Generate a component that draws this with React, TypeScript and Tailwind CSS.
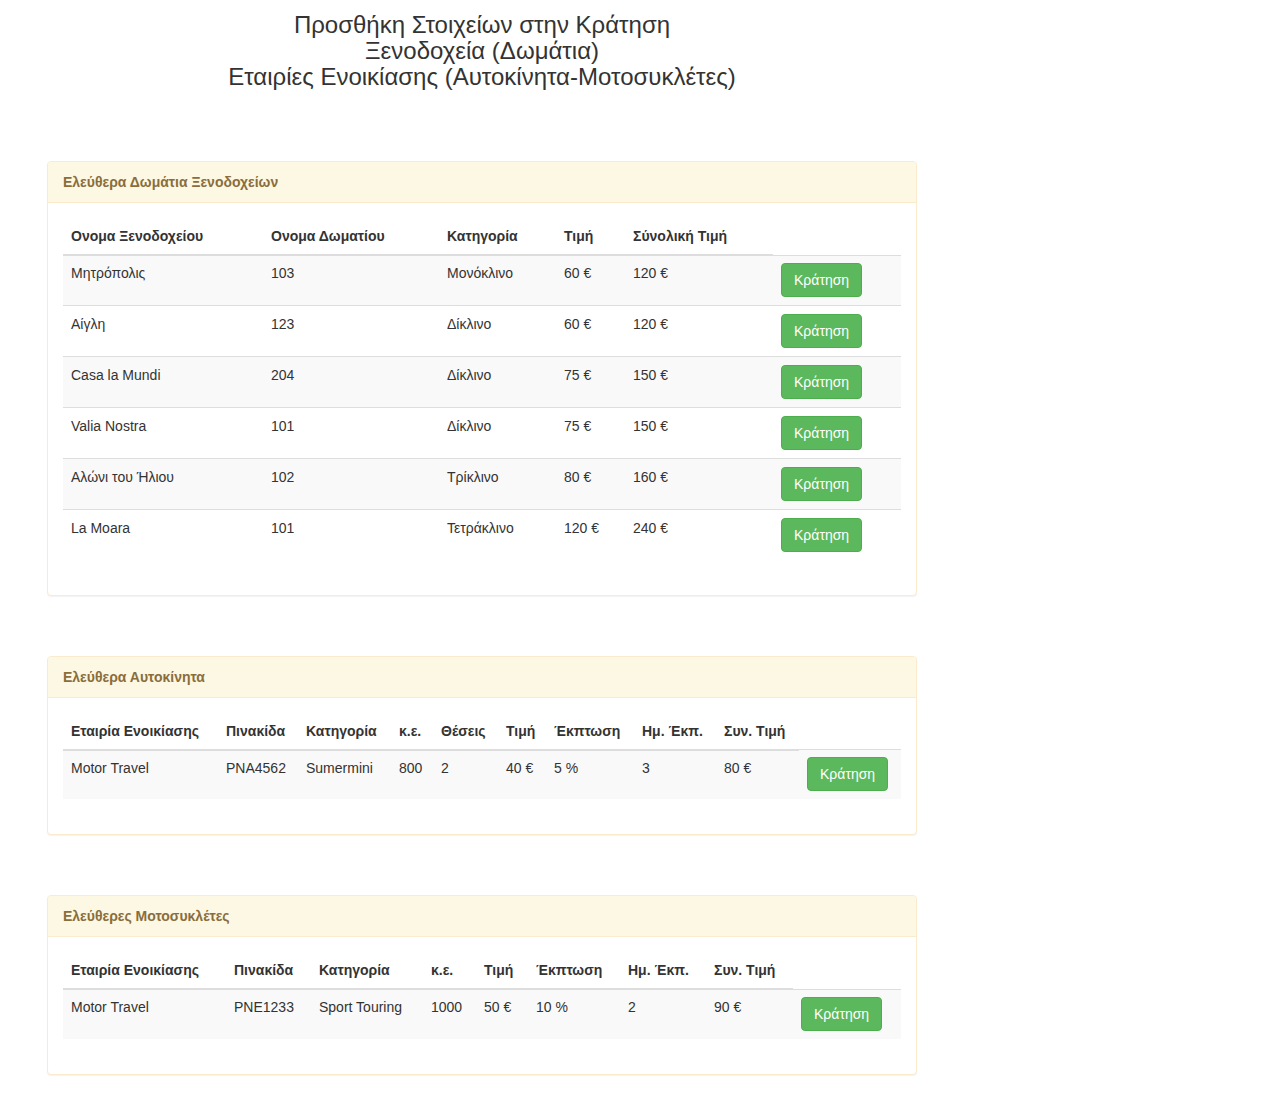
import React from 'react';

type Column = { label: string; width: number };

interface PanelTableProps {
  title: string;
  columns: Column[];
  buttonWidth: number;
  rows: string[][];
}

const hotelColumns: Column[] = [
  { label: 'Ονομα Ξενοδοχείου', width: 200 },
  { label: 'Ονομα Δωματίου', width: 176 },
  { label: 'Κατηγορία', width: 117 },
  { label: 'Τιμή', width: 69 },
  { label: 'Σύνολική Τιμή', width: 148 },
];

const hotelRows = [
  ['Μητρόπολις', '103', 'Μονόκλινο', '60 €', '120 €'],
  ['Αίγλη', '123', 'Δίκλινο', '60 €', '120 €'],
  ['Casa la Mundi', '204', 'Δίκλινο', '75 €', '150 €'],
  ['Valia Nostra', '101', 'Δίκλινο', '75 €', '150 €'],
  ['Αλώνι του Ήλιου', '102', 'Τρίκλινο', '80 €', '160 €'],
  ['La Moara', '101', 'Τετράκλινο', '120 €', '240 €'],
];

const carColumns: Column[] = [
  { label: 'Εταιρία Ενοικίασης', width: 155 },
  { label: 'Πινακίδα', width: 80 },
  { label: 'Κατηγορία', width: 93 },
  { label: 'κ.ε.', width: 42 },
  { label: 'Θέσεις', width: 65 },
  { label: 'Τιμή', width: 48 },
  { label: 'Έκπτωση', width: 88 },
  { label: 'Ημ. Έκπ.', width: 82 },
  { label: 'Συν. Τιμή', width: 83 },
];

const carRows = [['Motor Travel', 'PNA4562', 'Sumermini', '800', '2', '40 €', '5 %', '3', '80 €']];

const motoColumns: Column[] = [
  { label: 'Εταιρία Ενοικίασης', width: 163 },
  { label: 'Πινακίδα', width: 85 },
  { label: 'Κατηγορία', width: 112 },
  { label: 'κ.ε.', width: 53 },
  { label: 'Τιμή', width: 52 },
  { label: 'Έκπτωση', width: 92 },
  { label: 'Ημ. Έκπ.', width: 86 },
  { label: 'Συν. Τιμή', width: 87 },
];

const motoRows = [['Motor Travel', 'PNE1233', 'Sport Touring', '1000', '50 €', '10 %', '2', '90 €']];

function PanelTable({ title, columns, buttonWidth, rows }: PanelTableProps) {
  return (
    <div className="rounded-[4px] border border-[#faebcc] bg-white shadow-[0_1px_1px_rgba(0,0,0,0.05)]">
      {/* Heading */}
      <div className="rounded-t-[3px] border-b border-[#faebcc] bg-[#fcf8e3] px-[15px] py-[10px] text-[14px] leading-[20px] font-bold text-[#8a6d3b]">
        {title}
      </div>

      {/* Body */}
      <div className="p-[15px]">
        <table className="mb-[20px] w-full table-fixed border-collapse">
          <colgroup>
            {columns.map((c) => (
              <col key={c.label} style={{ width: c.width }} />
            ))}
            <col style={{ width: buttonWidth }} />
          </colgroup>
          <thead>
            <tr>
              {columns.map((c) => (
                <th
                  key={c.label}
                  className="border-b-2 border-[#ddd] p-[8px] text-left align-bottom text-[14px] leading-[20px] font-bold whitespace-nowrap"
                >
                  {c.label}
                </th>
              ))}
            </tr>
          </thead>
          <tbody>
            {rows.map((row, i) => {
              const cell = i === 0 ? 'px-[8px] pt-[7px] pb-[8px]' : 'p-[8px]';
              return (
                <tr key={i} className={i % 2 === 0 ? 'bg-[#f9f9f9]' : ''}>
                  {row.map((value, j) => (
                    <td
                      key={j}
                      className={`border-t border-[#ddd] ${cell} align-top text-[14px] leading-[20px] whitespace-nowrap`}
                    >
                      {value}
                    </td>
                  ))}
                  <td className={`border-t border-[#ddd] ${cell} align-top`}>
                    <button className="rounded-[4px] border border-[#4cae4c] bg-[#5cb85c] px-[12px] py-[6px] text-[14px] leading-[20px] text-white">
                      Κράτηση
                    </button>
                  </td>
                </tr>
              );
            })}
          </tbody>
        </table>
      </div>
    </div>
  );
}

export default function App() {
  return (
    <div className="min-h-screen bg-white font-['Liberation_Sans',Arial,sans-serif] text-[14px] text-[#333]">
      <div className="ml-[47px] w-[870px] pb-[20px]">
        {/* Title */}
        <h3 className="pt-[12px] text-center text-[24px] leading-[26px] font-normal">
          Προσθήκη Στοιχείων στην Κράτηση
          <br />
          Ξενοδοχεία (Δωμάτια)
          <br />
          Εταιρίες Ενοικίασης (Αυτοκίνητα-Μοτοσυκλέτες)
        </h3>

        <div className="mt-[71px]">
          <PanelTable title="Ελεύθερα Δωμάτια Ξενοδοχείων" columns={hotelColumns} buttonWidth={128} rows={hotelRows} />
        </div>

        <div className="mt-[60px]">
          <PanelTable title="Ελεύθερα Αυτοκίνητα" columns={carColumns} buttonWidth={102} rows={carRows} />
        </div>

        <div className="mt-[60px]">
          <PanelTable title="Ελεύθερες Μοτοσυκλέτες" columns={motoColumns} buttonWidth={108} rows={motoRows} />
        </div>
      </div>
    </div>
  );
}
